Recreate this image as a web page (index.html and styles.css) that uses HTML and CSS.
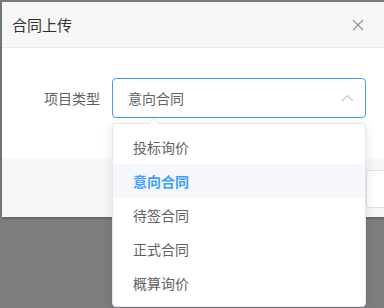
FILE: index.html
```html
<!DOCTYPE html>
<html>
<head>
    <meta charset="UTF-8">
    <meta name="viewport" content="width=device-width, initial-scale=1.0">
    <link rel="stylesheet" href="styles.css">
</head>
<body>
    <div class="dialog">
        <div class="dialog-header">
            <span class="dialog-title">合同上传</span>
            <svg class="dialog-close" width="12" height="12" viewBox="0 0 12 12">
                <path d="M1 1 L11 11 M11 1 L1 11" stroke="#909399" stroke-width="1.2" fill="none"/>
            </svg>
        </div>
        <div class="dialog-body">
            <div class="form-item">
                <label class="form-label">项目类型</label>
                <div class="select">
                    <div class="select-input">
                        <span>意向合同</span>
                        <svg class="select-arrow" width="13" height="8" viewBox="0 0 13 8">
                            <path d="M1 7 L6.5 1.5 L12 7" stroke="#c0c4cc" stroke-width="1.2" fill="none"/>
                        </svg>
                    </div>
                    <!-- 下拉菜单 -->
                    <div class="dropdown">
                        <div class="dropdown-arrow"></div>
                        <ul class="dropdown-list">
                            <li class="dropdown-item">投标询价</li>
                            <li class="dropdown-item selected">意向合同</li>
                            <li class="dropdown-item">待签合同</li>
                            <li class="dropdown-item">正式合同</li>
                            <li class="dropdown-item">概算询价</li>
                        </ul>
                    </div>
                </div>
            </div>
        </div>
        <div class="dialog-footer">
            <button class="btn" aria-label="取消"></button>
        </div>
    </div>
</body>
</html>
```
FILE: styles.css
```css
body {
    margin: 0;
    height: 308px;
    overflow: hidden;
    background-color: #7d7d7d;
    font-family: "Noto Sans CJK SC", "Noto Sans", sans-serif;
}
.dialog {
    width: 382px;
    margin: 2px 0 0 2px;
    background-color: #fff;
    box-shadow: 0 1px 3px rgba(0, 0, 0, 0.3);
}
.dialog-header {
    height: 45px;
    display: flex;
    align-items: center;
    justify-content: space-between;
    padding: 0 20px 0 10px;
    background-color: #f7f7f7;
    border-bottom: 1px solid #e8e8e8;
}
.dialog-title {
    font-size: 15px;
    color: #303133;
}
.dialog-close {
    display: block;
}
.dialog-body {
    padding: 30px 18px 40px 20px;
}
.form-item {
    display: flex;
    align-items: center;
}
.form-label {
    flex-shrink: 0;
    width: 90px;
    padding-right: 12px;
    box-sizing: border-box;
    text-align: right;
    font-size: 14px;
    color: #606266;
}
.select {
    position: relative;
    width: 254px;
    flex-shrink: 0;
}
.select-input {
    height: 40px;
    box-sizing: border-box;
    border: 1px solid #409eff;
    border-radius: 4px;
    padding: 0 11px 0 15px;
    display: flex;
    align-items: center;
    justify-content: space-between;
    font-size: 14px;
    color: #606266;
}
.select-arrow {
    display: block;
}
/* 下拉菜单 */
.dropdown {
    position: absolute;
    left: 0;
    top: calc(100% + 5px);
    width: 100%;
    box-sizing: border-box;
    background-color: #fff;
    border: 1px solid #e4e7ed;
    border-radius: 4px;
    box-shadow: 0 2px 12px rgba(0, 0, 0, 0.1);
}
.dropdown-arrow {
    position: absolute;
    left: 35px;
    top: -6px;
    width: 0;
    height: 0;
    border-left: 6px solid transparent;
    border-right: 6px solid transparent;
    border-bottom: 6px solid #e4e7ed;
}
.dropdown-arrow::after {
    content: "";
    position: absolute;
    left: -5px;
    top: 1px;
    border-left: 5px solid transparent;
    border-right: 5px solid transparent;
    border-bottom: 5px solid #fff;
}
.dropdown-list {
    list-style: none;
    margin: 0;
    padding: 6px 0;
}
.dropdown-item {
    height: 34px;
    line-height: 34px;
    padding: 0 20px;
    font-size: 14px;
    color: #606266;
}
.dropdown-item.selected {
    color: #409eff;
    font-weight: bold;
    background-color: #f5f7fa;
}
.dialog-footer {
    display: flex;
    padding: 12px 0 9px 364px;
    background-color: #f7f7f7;
}
.btn {
    flex-shrink: 0;
    width: 60px;
    height: 38px;
    background-color: #fff;
    border: 1px solid #dcdfe6;
    border-radius: 4px;
}
```
